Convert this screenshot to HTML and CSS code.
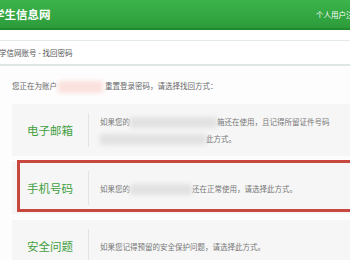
FILE: index.html
```html
<!DOCTYPE html>
<html lang="zh-CN">
<head>
    <meta charset="UTF-8">
    <meta name="viewport" content="width=device-width, initial-scale=1.0">
    <title>学信网账号 - 找回密码</title>
    <link rel="stylesheet" href="styles.css">
</head>
<body>
<div class="pagina">

<!-- 顶部 -->
<div class="cabecera">
    <span class="titulo">学生信息网</span>
    <span class="usuario">个人用户注册</span>
</div>
<div class="franja"></div>
<div class="ruta">学信网账号 - 找回密码</div>

<!-- 内容 -->
<p class="aviso">您正在为账户<span class="oculto rosa"></span>重置登录密码，请选择找回方式：</p>

<div class="metodo">
    <div class="etiqueta">电子邮箱</div>
    <div class="linea"></div>
    <div class="texto">
        <div>如果您的<span class="oculto gris ancho1"></span>箱还在使用，且记得所留证件号码</div>
        <div><span class="oculto gris ancho2"></span>此方式。</div>
    </div>
</div>

<div class="metodo marcado">
    <div class="etiqueta">手机号码</div>
    <div class="linea"></div>
    <div class="texto">
        <div>如果您的<span class="oculto gris ancho3"></span>还在正常使用，请选择此方式。</div>
    </div>
    <div class="recuadro"></div>
</div>

<div class="metodo">
    <div class="etiqueta">安全问题</div>
    <div class="linea"></div>
    <div class="texto">
        <div>如果您记得预留的安全保护问题，请选择此方式。</div>
    </div>
</div>

</div>
</body>
</html>
```

FILE: styles.css
```css
/* Base */
html, body {
    margin: 0;
    overflow: hidden;
}
body {
    font-family: "Noto Sans CJK SC", "Noto Sans", sans-serif;
    background-color: #fdfdfd;
}
.pagina {
    width: 350px;
    height: 260px;
    overflow: hidden;
}

/* Cabecera verde */
.cabecera {
    height: 28px;
    display: flex;
    align-items: center;
    background: linear-gradient(#3db44b, #2c9c3a);
    border-bottom: 2px solid #218a2e;
    color: #fff;
    white-space: nowrap;
}
.titulo {
    margin-left: -7px;
    font-size: 11.5px;
    font-weight: bold;
}
.usuario {
    margin-left: auto;
    margin-right: -11px;
    font-size: 7.5px;
    flex-shrink: 0;
}
.franja {
    height: 10px;
    background-color: #fff;
    border-bottom: 1px solid #e4e9e9;
}
.ruta {
    height: 23px;
    line-height: 23px;
    margin-left: -1px;
    font-size: 7.5px;
    color: #555;
    background-color: #fff;
    border-bottom: 2px solid #dfe6e6;
}

/* Aviso */
.aviso {
    margin: 11px 0 10px 12px;
    line-height: 17px;
    font-size: 7.5px;
    color: #666;
    white-space: nowrap;
}
.oculto {
    display: inline-block;
    vertical-align: middle;
    filter: blur(2px);
}
.rosa {
    width: 45px;
    height: 12px;
    margin: 0 2px 0 1px;
    background-color: #fbe1dd;
}
.gris {
    height: 11px;
    background-color: #e2e2e2;
}
.ancho1 { width: 87px; }
.ancho2 { width: 106px; }
.ancho3 { width: 62px; }

/* Métodos */
.metodo {
    position: relative;
    width: 360px;
    height: 52px;
    margin: 0 0 6px 12px;
    display: flex;
    align-items: center;
    background-color: #f6f6f6;
    white-space: nowrap;
}
.etiqueta {
    width: 76px;
    flex-shrink: 0;
    padding-left: 15px;
    box-sizing: border-box;
    font-size: 11.5px;
    color: #3f9f3f;
}
.linea {
    width: 1px;
    height: 34px;
    flex-shrink: 0;
    background-color: #e4e4e4;
}
.texto {
    padding-left: 11px;
    font-size: 7.5px;
    line-height: 17px;
    color: #777;
}
.recuadro {
    position: absolute;
    left: 5px;
    top: -2px;
    right: -10px;
    bottom: 2px;
    border: 3px solid #c8473f;
}
```
